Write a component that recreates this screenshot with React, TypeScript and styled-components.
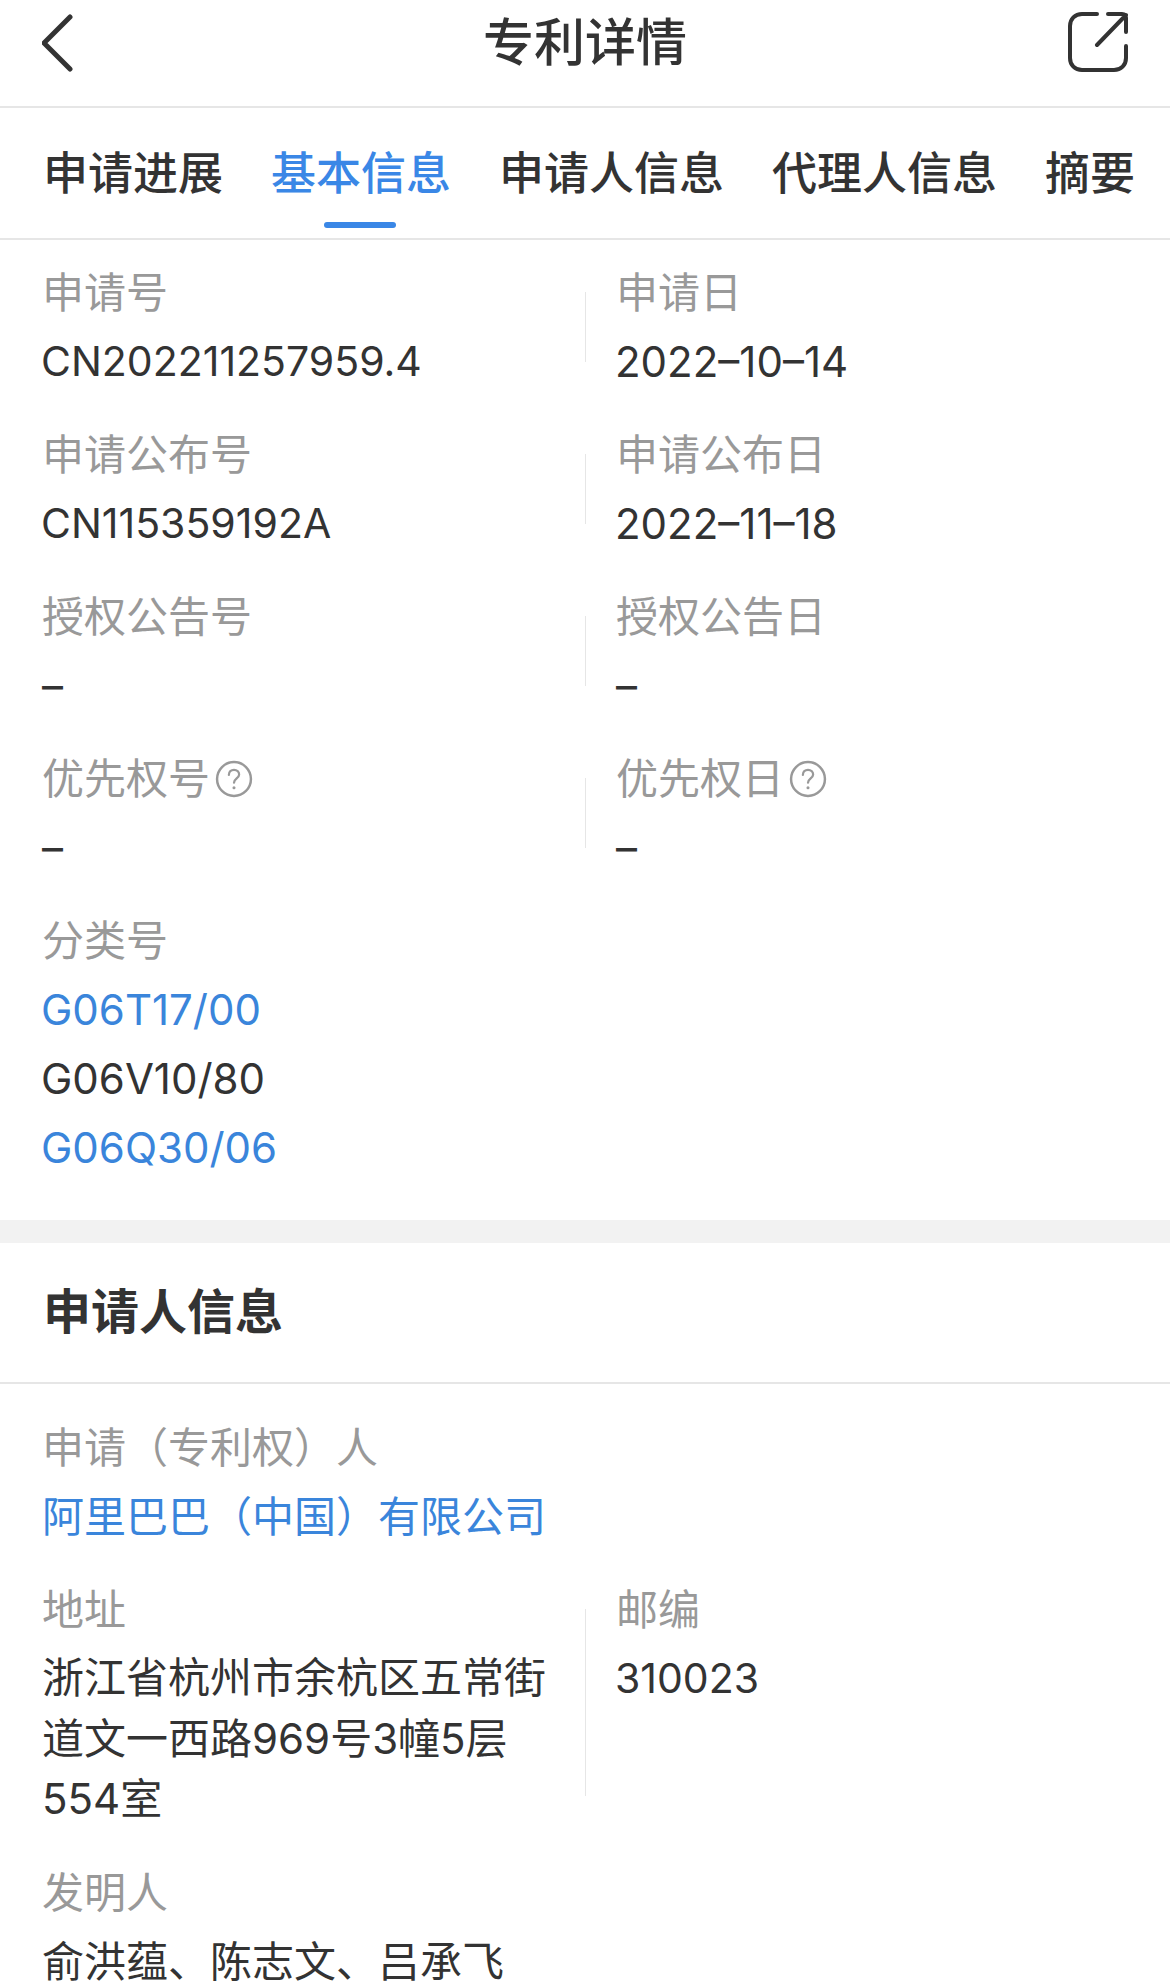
import React from "react";
import styled, { createGlobalStyle } from "styled-components";

const Global = createGlobalStyle`
  html, body { margin: 0; padding: 0; background: #fff; }
  body { font-family: "Liberation Sans", "Noto Sans CJK SC", sans-serif; }
`;

const Page = styled.div`
  width: 1170px;
  height: 1983px;
  overflow: hidden;
  background: #fff;
  color: #333;
`;

const Header = styled.header`
  height: 106px;
  border-bottom: 2px solid #e6e6e6;
  display: flex;
  align-items: center;
  justify-content: space-between;
  padding: 0 42px;
`;

const Title = styled.h1`
  margin: -18px 0 0;
  font-size: 51px;
  font-weight: 500;
  line-height: 84px;
  color: #333;
`;

const IconSlot = styled.div`
  width: 60px;
  height: 60px;
  display: flex;
  margin-top: -22px;
`;

const Tabs = styled.nav`
  height: 130px;
  border-bottom: 2px solid #e6e6e6;
  display: flex;
  gap: 48px;
  padding-left: 43px;
`;

const Tab = styled.div<{ $active?: boolean }>`
  position: relative;
  font-size: 45px;
  font-weight: 500;
  line-height: 130px;
  margin-top: 2px;
  height: 128px;
  white-space: nowrap;
  color: ${(p) => (p.$active ? "#3a87e6" : "#333")};
  &::after {
    content: "";
    display: ${(p) => (p.$active ? "block" : "none")};
    position: absolute;
    left: 50%;
    bottom: 10px;
    width: 72px;
    height: 6px;
    margin-left: -37px;
    border-radius: 3px;
    background: #3a87e6;
  }
`;

const Section = styled.section<{ $top: number }>`
  padding: ${(p) => p.$top}px 0 0 42px;
`;

const Row = styled.div<{ $gap?: number }>`
  display: flex;
  margin-bottom: ${(p) => p.$gap ?? 24}px;
`;

const Cell = styled.div`
  width: 543px;
  flex: none;
`;

const Divider = styled.div`
  width: 1px;
  flex: none;
  margin: 34px 30px 34px 0;
  background: #e6e6e6;
`;

const Label = styled.div`
  display: flex;
  align-items: center;
  box-sizing: border-box;
  height: 69px;
  padding-top: 2px;
  font-size: 42px;
  line-height: 67px;
  color: #999;
`;

const valueFont = `"Inter", "Noto Sans CJK SC", sans-serif`;

const Value = styled.div<{ $link?: boolean; $latin?: boolean; $size?: number }>`
  font-family: ${valueFont};
  font-size: ${(p) => p.$size ?? 42}px;
  line-height: 69px;
  margin-left: ${(p) => (p.$latin ? -1 : 0)}px;
  color: ${(p) => (p.$link ? "#3a85db" : "#333")};
`;

const Multi = styled.div`
  font-family: ${valueFont};
  font-size: 42px;
  line-height: 60.5px;
  color: #333;
  width: 510px;
  padding-top: 4px;
`;

const Band = styled.div`
  height: 23px;
  margin-top: 38px;
  background: #f2f2f2;
`;

const SectionTitle = styled.h2`
  margin: 0;
  height: 139px;
  border-bottom: 2px solid #e6e6e6;
  padding-left: 43px;
  font-size: 48px;
  font-weight: 700;
  line-height: 140px;
  color: #333;
`;

const HelpIcon = styled.svg`
  margin: -2px 0 0 5px;
  flex: none;
`;

const Help = () => (
  <HelpIcon width="38" height="38" viewBox="0 0 37 37" fill="none">
    <circle cx="18.5" cy="18.5" r="16.5" stroke="#999" strokeWidth="2.4" />
    <path d="M13.5 14.500c0-3 2.200-5 5-5s5 2 5 4.600c0 3.600-5 4-5 8" stroke="#999" strokeWidth="2.2" strokeLinecap="round" />
    <circle cx="18.5" cy="27" r="1.5" fill="#999" />
  </HelpIcon>
);

type Entry = { label: string; value: string; help?: boolean; size?: number; flush?: boolean };

const Info = ({ a, b }: { a: Entry; b: Entry }) => (
  <Row>
    <Cell>
      <Label>{a.label}{a.help && <Help />}</Label>
      <Value $latin={!a.flush} $size={a.size}>{a.value}</Value>
    </Cell>
    <Divider />
    <Cell>
      <Label>{b.label}{b.help && <Help />}</Label>
      <Value $latin={!b.flush} $size={b.size}>{b.value}</Value>
    </Cell>
  </Row>
);

export default function App() {
  return (
    <Page>
      <Global />
      <Header>
        <IconSlot>
          <svg width="34" height="60" viewBox="0 0 34 60" fill="none">
            <path d="M28 5 2 31l26 26" stroke="#333" strokeWidth="5" strokeLinecap="round" strokeLinejoin="round" />
          </svg>
        </IconSlot>
        <Title>专利详情</Title>
        <IconSlot>
          <svg width="60" height="60" viewBox="0 0 60 60" fill="none">
            <path d="M29 2H14C7 2 2 7 2 14v32c0 7 5 12 12 12h32c7 0 12-5 12-12V34" stroke="#333" strokeWidth="4" strokeLinecap="round" />
            <path d="M29 33 58 3M40 2h14c2.500 0 4 1.500 4 4v14" stroke="#333" strokeWidth="4" strokeLinecap="round" strokeLinejoin="round" />
          </svg>
        </IconSlot>
      </Header>
      <Tabs>
        <Tab>申请进展</Tab>
        <Tab $active>基本信息</Tab>
        <Tab>申请人信息</Tab>
        <Tab>代理人信息</Tab>
        <Tab>摘要</Tab>
      </Tabs>
      <Section $top={18}>
        <Info a={{ label: "申请号", value: "CN202211257959.4", size: 41 }} b={{ label: "申请日", value: "2022–10–14" }} />
        <Info a={{ label: "申请公布号", value: "CN115359192A", size: 41 }} b={{ label: "申请公布日", value: "2022–11–18" }} />
        <Info a={{ label: "授权公告号", value: "–", flush: true }} b={{ label: "授权公告日", value: "–", flush: true }} />
        <Info a={{ label: "优先权号", value: "–", help: true, flush: true }} b={{ label: "优先权日", value: "–", help: true, flush: true }} />
        <Label>分类号</Label>
        <Value $link $latin>G06T17/00</Value>
        <Value $latin>G06V10/80</Value>
        <Value $link $latin>G06Q30/06</Value>
      </Section>
      <Band />
      <SectionTitle>申请人信息</SectionTitle>
      <Section $top={29}>
        <Row>
          <Cell>
            <Label>申请（专利权）人</Label>
            <Value $link>阿里巴巴（中国）有限公司</Value>
          </Cell>
        </Row>
        <Row $gap={28}>
          <Cell>
            <Label>地址</Label>
            <Multi>浙江省杭州市余杭区五常街道文一西路969号3幢5层554室</Multi>
          </Cell>
          <Divider />
          <Cell>
            <Label>邮编</Label>
            <Value $latin $size={41}>310023</Value>
          </Cell>
        </Row>
        <Label>发明人</Label>
        <Value>俞洪蕴、陈志文、吕承飞</Value>
      </Section>
    </Page>
  );
}
